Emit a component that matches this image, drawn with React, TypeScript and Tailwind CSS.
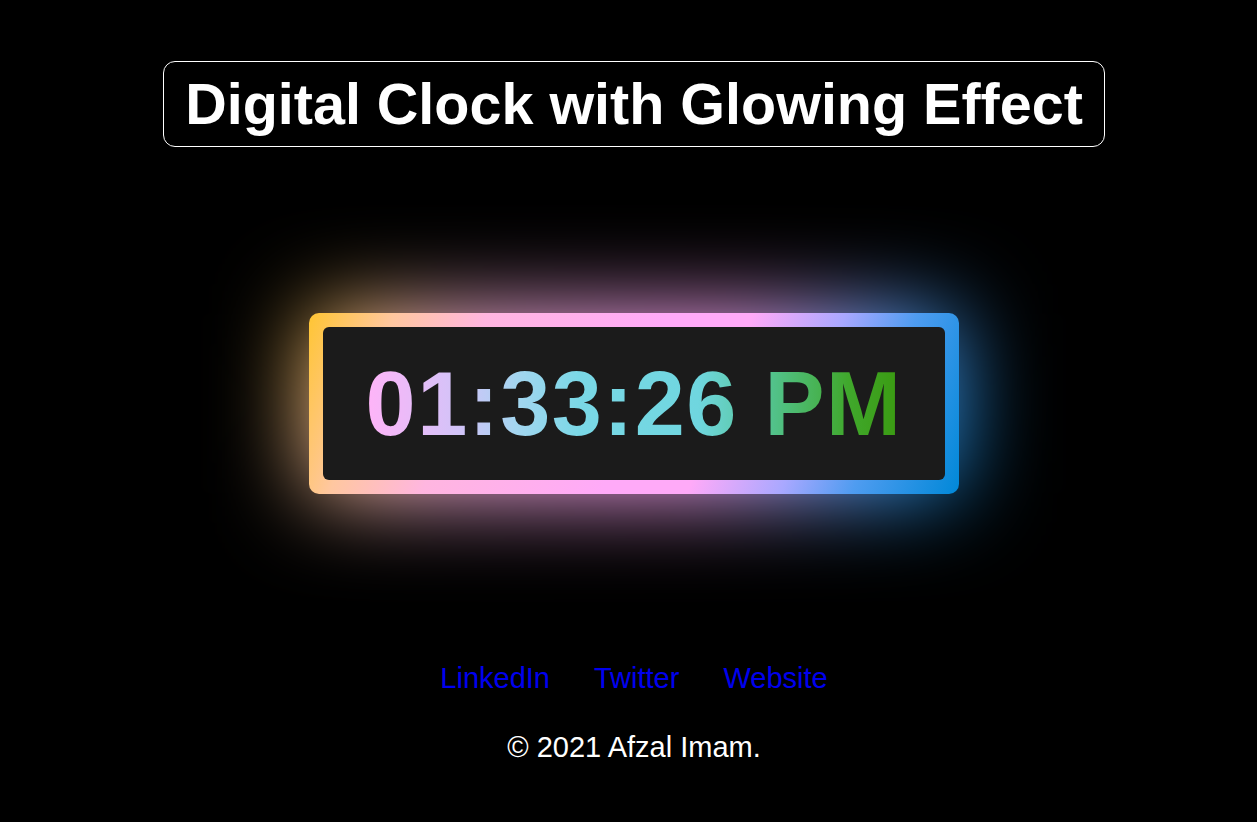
import React from "react";

export default function App() {
  return (
    <div
      className="min-h-[822px] w-full bg-black flex flex-col items-center pl-[11px] overflow-hidden"
      style={{ fontFamily: '"Liberation Sans", Arial, sans-serif' }}
    >
      <h1 className="mt-[61px] border border-white rounded-[12px] px-[21px] py-[10px] text-white font-bold text-[57.5px] leading-[64px] whitespace-nowrap">
        Digital Clock with Glowing Effect
      </h1>

      <div className="relative mt-[166px] w-[650px] h-[181px]">
        <div className="absolute inset-0 rounded-[10px] blur-[45px] bg-[linear-gradient(110deg,#ffc533_0%,#ffc7a0_12%,#ffb6e0_25%,#ffaaf8_50%,#ffaaf8_62%,#a9a8ff_75%,#4f9cf0_85%,#0088d8_100%)]" />
        <div className="relative h-full w-full rounded-[10px] p-[14px] bg-[linear-gradient(110deg,#ffc533_0%,#ffc7a0_12%,#ffb6e0_25%,#ffaaf8_50%,#ffaaf8_62%,#a9a8ff_75%,#4f9cf0_85%,#0088d8_100%)]">
          <div className="h-full w-full rounded-[6px] bg-[#1b1b1b] flex items-center justify-center">
            <span className="font-bold text-[90px] leading-none tracking-[1.5px] whitespace-nowrap bg-clip-text text-transparent bg-[linear-gradient(to_right,#ffb4f8_0%,#d0c4f8_18%,#a4d6f0_28%,#7ad8e6_40%,#6fd6df_62%,#52c28a_76%,#40a82c_90%,#3a9a10_100%)]">
              01:33:26 PM
            </span>
          </div>
        </div>
      </div>

      <div className="mt-[168px] flex gap-[44px] text-[29px] leading-[33px] text-[#0000ee]">
        <a href="#">LinkedIn</a>
        <a href="#">Twitter</a>
        <a href="#">Website</a>
      </div>

      <p className="mt-[36px] text-white text-[29px] leading-[33px]">© 2021 Afzal Imam.</p>
    </div>
  );
}
